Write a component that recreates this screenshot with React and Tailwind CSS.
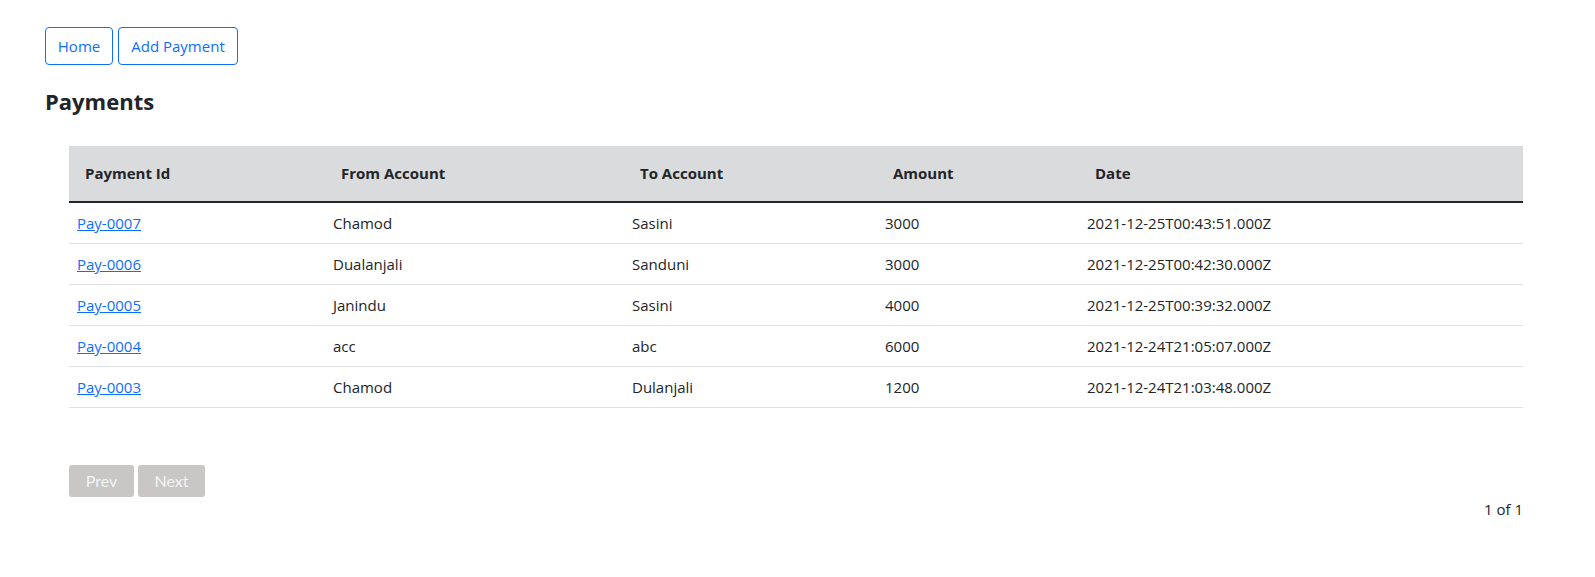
import React from "react";

const rows = [
  ["Pay-0007", "Chamod", "Sasini", "3000", "2021-12-25T00:43:51.000Z"],
  ["Pay-0006", "Dualanjali", "Sanduni", "3000", "2021-12-25T00:42:30.000Z"],
  ["Pay-0005", "Janindu", "Sasini", "4000", "2021-12-25T00:39:32.000Z"],
  ["Pay-0004", "acc", "abc", "6000", "2021-12-24T21:05:07.000Z"],
  ["Pay-0003", "Chamod", "Dulanjali", "1200", "2021-12-24T21:03:48.000Z"],
];

const cols = ["w-[256px]", "w-[299px]", "w-[253px]", "w-[202px]", "flex-1"];
const heads = ["Payment Id", "From Account", "To Account", "Amount", "Date"];

export default function App() {
  return (
    <div
      className="min-h-[577px] bg-white px-[45px] pt-[27px] text-[#212529]"
      style={{ fontFamily: '"Open Sans", "Noto Sans", sans-serif' }}
    >
      <div className="flex gap-[5px]">
        <button className="h-[38px] w-[68px] rounded-[4px] border border-[#0d6efd] text-[15px] text-[#0d6efd]">
          Home
        </button>
        <button className="h-[38px] w-[120px] rounded-[4px] border border-[#0d6efd] text-[15px] text-[#0d6efd]">
          Add Payment
        </button>
      </div>
      <h4 className="mt-[21px] text-[22px] font-bold leading-[30px] text-[#212529]">
        Payments
      </h4>
      <div className="ml-[24px] mt-[30px] w-[1454px]">
        <div className="flex h-[57px] items-center border-b-2 border-[#212529] bg-[#dadbdd] text-[15px] font-bold">
          {heads.map((h, i) => (
            <div key={h} className={`${cols[i]} pl-[16px]`}>
              {h}
            </div>
          ))}
        </div>
        {rows.map((r) => (
          <div
            key={r[0]}
            className="flex h-[41px] items-center border-b border-[#dee2e6] text-[15px]"
          >
            {r.map((c, i) => (
              <div key={i} className={`${cols[i]} pl-[8px]`}>
                {i === 0 ? (
                  <a href="#" className="text-[#0d6efd] underline">
                    {c}
                  </a>
                ) : (
                  c
                )}
              </div>
            ))}
          </div>
        ))}
        <div
          className="mt-[57px] flex gap-[4px]"
          style={{ fontFamily: "Lato, sans-serif" }}
        >
          <button className="h-[32px] w-[65px] rounded-[3px] bg-[#c8c7c6] text-[16px] text-[#f4f4f4]">
            Prev
          </button>
          <button className="h-[32px] w-[67px] rounded-[3px] bg-[#c8c7c6] text-[16px] text-[#f4f4f4]">
            Next
          </button>
        </div>
        <div className="text-right text-[15px] leading-[24px]">1 of 1</div>
      </div>
    </div>
  );
}
